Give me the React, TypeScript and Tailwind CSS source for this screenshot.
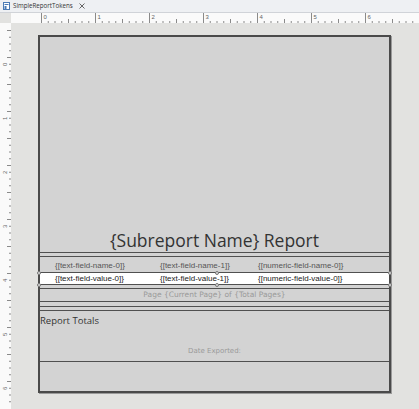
import React from 'react';

const inch = 54;

function TopRuler() {
  const ticks = [];
  for (let i = 0; i < 64; i++) {
    const x = 30.5 + i * (inch / 8);
    const major = i % 8 === 0;
    const half = i % 4 === 0;
    const h = major ? 10 : half ? 4 : 2;
    ticks.push(<line key={i} x1={x} x2={x} y1={10 - h} y2={10} stroke="#8a8a8a" strokeWidth={1} />);
  }
  return (
    <svg width={408} height={10} className="block">
      {ticks}
      {[0, 1, 2, 3, 4, 5, 6].map((n) => (
        <text key={n} x={32.5 + n * inch} y={6} fontSize={6} fill="#666" fontFamily="'Liberation Sans', sans-serif">
          {n}
        </text>
      ))}
    </svg>
  );
}

function LeftRuler() {
  const ticks = [];
  for (let i = 0; i < 56; i++) {
    const y = 7.5 + i * (inch / 8);
    const half = i % 4 === 0;
    const w = half ? 4 : 2;
    ticks.push(<line key={i} x1={11 - w} x2={11} y1={y} y2={y} stroke="#8a8a8a" strokeWidth={1} />);
  }
  return (
    <svg width={11} height={386} className="block shrink-0">
      {ticks}
      {[0, 1, 2, 3, 4, 5, 6].map((n) => (
        <text
          key={n}
          x={0}
          y={0}
          fontSize={6}
          fill="#666"
          fontFamily="'Liberation Sans', sans-serif"
          transform={`translate(7 ${43 + n * inch}) rotate(-90)`}
        >
          {n}
        </text>
      ))}
    </svg>
  );
}

function Line() {
  return <div className="h-px bg-[#505050]" />;
}

function Handle({ className }: { className: string }) {
  return <div className={`absolute h-[4px] w-[4px] rounded-full border border-[#777] bg-[#ddd] ${className}`} />;
}

function HandleLine() {
  return (
    <div className="relative">
      <Line />
      <Handle className="-left-[3px] -top-[1.5px]" />
      <Handle className="left-[175px] -top-[1.5px]" />
      <Handle className="-right-[3px] -top-[1.5px]" />
    </div>
  );
}

export default function App() {
  const field = "font-['Liberation_Sans',sans-serif] text-[8px] leading-none";
  return (
    <div className="flex h-[409px] w-[419px] flex-col overflow-hidden bg-[#e2e2e0] font-['Open_Sans',sans-serif]">
      {/* Tab bar */}
      <div className="flex h-[13px] shrink-0 items-center border-b border-[#d0d3d8] bg-[#eef0f3]">
        <div className="flex h-full items-center gap-[3px] pl-[3px] pr-[4px]">
          <svg width={7} height={8} viewBox="0 0 7 8">
            <rect x={0.5} y={0.5} width={6} height={7} fill="#fff" stroke="#4b7bb5" />
            <rect x={1.5} y={2} width={4} height={1} fill="#4b7bb5" />
            <rect x={1.5} y={4} width={2} height={3} fill="#4b7bb5" />
          </svg>
          <span className="text-[6.2px] leading-none text-[#333]">SimpleReportTokens</span>
          <svg width={6} height={6} viewBox="0 0 6 6" className="ml-[3px]">
            <path d="M0.5 0.5 L5.5 5.5 M5.5 0.5 L0.5 5.5" stroke="#555" strokeWidth={0.9} />
          </svg>
        </div>
      </div>

      {/* Top ruler */}
      <div className="flex h-[10px] shrink-0">
        <div className="w-[11px] bg-[#e2e2e0]" />
        <div className="flex-1 bg-[#fafafa]">
          <TopRuler />
        </div>
      </div>

      {/* Canvas */}
      <div className="flex flex-1">
        <div className="w-[11px] shrink-0 bg-[#fafafa]">
          <LeftRuler />
        </div>
        <div className="flex-1 pl-[27px] pt-[12px]">
          <div className="flex h-[358px] w-[353px] flex-col border-2 border-[#4a4a4a] bg-[#d3d3d3] shadow-[1px_1px_0_#9a9a9a]">
            {/* Title band */}
            <div className="flex h-[215px] items-end justify-center pb-[3px]">
              <span className="text-[17.5px] leading-none text-[#333]">{'{Subreport Name} Report'}</span>
            </div>
            <Line />
            <div className="h-[3px]" />
            <Line />
            {/* Header band */}
            <div className="grid h-[15px] grid-cols-[105px_98px_1fr] items-end pb-[2px] pl-[15px] text-[#555]">
              <span className={field}>{'{[text-field-name-0]}'}</span>
              <span className={field}>{'{[text-field-name-1]}'}</span>
              <span className={field}>{'{[numeric-field-name-0]}'}</span>
            </div>
            <HandleLine />
            {/* Detail row */}
            <div className="grid h-[11px] grid-cols-[105px_98px_1fr] items-center bg-white pl-[15px] text-[#222]">
              <span className={field}>{'{[text-field-value-0]}'}</span>
              <span className={field}>{'{[text-field-value-1]}'}</span>
              <span className={field}>{'{[numeric-field-value-0]}'}</span>
            </div>
            <HandleLine />
            <div className="h-[3px]" />
            <Line />
            {/* Page footer */}
            <div className="flex h-[12px] items-center justify-center">
              <span className="font-['DejaVu_Sans',sans-serif] text-[7.5px] leading-none text-[#9a9a9a]">
                {'Page {Current Page} of {Total Pages}'}
              </span>
            </div>
            <Line />
            <div className="h-[4px]" />
            <Line />
            <div className="h-[3px]" />
            <Line />
            {/* Report totals */}
            <div className="flex h-[50px] flex-col">
              <span className="pt-[5px] text-[9.5px] leading-none text-[#333]">Report Totals</span>
              <span className="mt-[22px] text-center font-['DejaVu_Sans',sans-serif] text-[7px] leading-none text-[#9a9a9a]">
                Date Exported:
              </span>
            </div>
            <Line />
            <div className="flex-1" />
          </div>
        </div>
      </div>

      {/* Bottom strip */}
      <div className="flex h-[4px] shrink-0 bg-[#f0f0f0]">
        <div className="ml-[256px] h-full flex-1 bg-[#dadada]" />
      </div>
    </div>
  );
}
